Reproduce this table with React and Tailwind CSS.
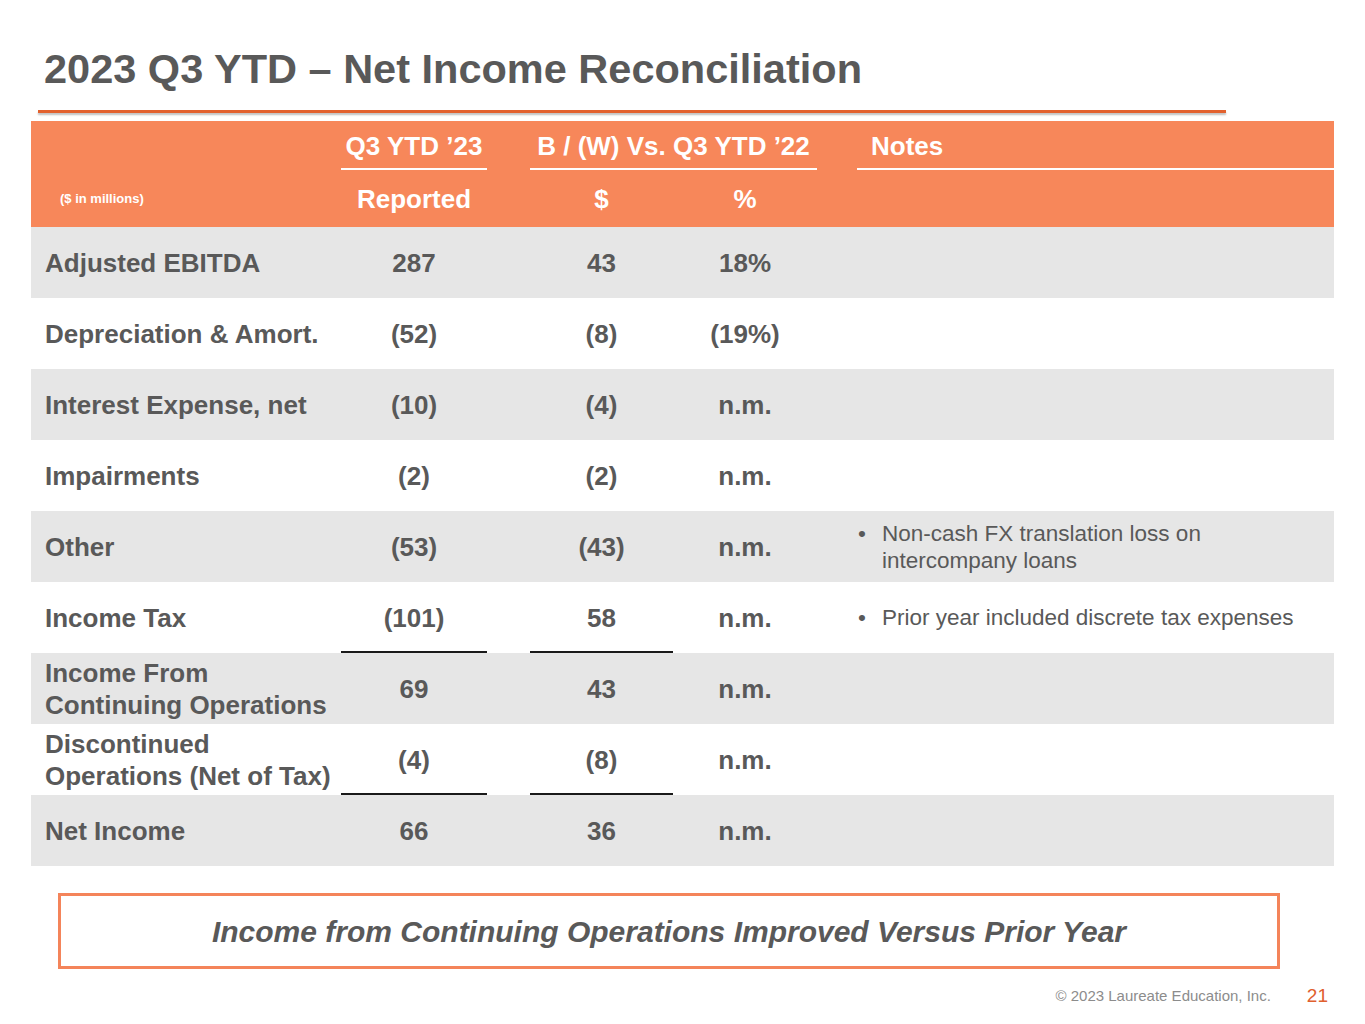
const rows = [
  { label: ["Adjusted EBITDA"], rep: "287", usd: "43", pct: "18%", grey: true },
  { label: ["Depreciation & Amort."], rep: "(52)", usd: "(8)", pct: "(19%)" },
  { label: ["Interest Expense, net"], rep: "(10)", usd: "(4)", pct: "n.m.", grey: true },
  { label: ["Impairments"], rep: "(2)", usd: "(2)", pct: "n.m." },
  {
    label: ["Other"],
    rep: "(53)",
    usd: "(43)",
    pct: "n.m.",
    grey: true,
    note: ["Non-cash FX translation loss on", "intercompany loans"],
  },
  {
    label: ["Income Tax"],
    rep: "(101)",
    usd: "58",
    pct: "n.m.",
    rule: true,
    note: ["Prior year included discrete tax expenses"],
  },
  { label: ["Income From", "Continuing Operations"], rep: "69", usd: "43", pct: "n.m.", grey: true },
  { label: ["Discontinued", "Operations (Net of Tax)"], rep: "(4)", usd: "(8)", pct: "n.m.", rule: true },
  { label: ["Net Income"], rep: "66", usd: "36", pct: "n.m.", grey: true },
];

const cols = "grid grid-cols-[310px_146px_43px_143px_144px_40px_477px]";

function DataRow({ row }) {
  const ruleCls = row.rule ? "border-b-2 border-[#1a1a1a]" : "border-b-2 border-transparent";
  return (
    <div className={`${cols} h-[71px] ${row.grey ? "bg-[#e6e6e6]" : "bg-white"}`}>
      <div className="flex flex-col justify-center pl-[14px] pt-[1px] text-[26px] leading-[32px] font-bold">
        {row.label.map((l) => (
          <span key={l} className="whitespace-nowrap">{l}</span>
        ))}
      </div>
      <div className={`flex items-center justify-center pt-[3px] text-[26px] font-bold ${ruleCls}`}>{row.rep}</div>
      <div />
      <div className={`flex items-center justify-center pt-[3px] text-[26px] font-bold ${ruleCls}`}>{row.usd}</div>
      <div className="flex items-center justify-center pt-[1px] text-[26px] font-bold">{row.pct}</div>
      <div />
      <div className="flex items-center">
        {row.note ? (
          <div className="flex text-[22.5px] leading-[27px]">
            <span className="w-[25px] pl-[1px]">•</span>
            <div className="flex flex-col">
              {row.note.map((n) => (
                <span key={n} className="whitespace-nowrap">{n}</span>
              ))}
            </div>
          </div>
        ) : null}
      </div>
    </div>
  );
}

export default function App() {
  return (
    <div
      className="w-[1365px] h-[1024px] bg-white text-[#595959] flex flex-col"
      style={{ fontFamily: '"Liberation Sans", Arial, sans-serif' }}
    >
      <h1 className="pl-[44px] pt-[45px] text-[41.5px] leading-[48px] font-bold text-[#595959]">
        2023 Q3 YTD – Net Income Reconciliation
      </h1>
      <div className="ml-[38px] mt-[17px] w-[1188px] h-[3px] bg-[#e2612e] shadow-[0_2px_2px_rgba(0,0,0,0.25)]" />

      <div className="ml-[31px] mt-[8px] w-[1303px]">
        <div className="bg-[#f7875a] text-white font-bold">
          <div className={`${cols} h-[49px]`}>
            <div />
            <div className="flex items-center justify-center pt-[3px] text-[26px] border-b-2 border-white">Q3 YTD ’23</div>
            <div className="col-span-3 flex items-center justify-center pt-[3px] text-[26px] border-b-2 border-white ml-[43px]">
              B / (W) Vs. Q3 YTD ’22
            </div>
            <div className="col-span-2 flex items-center pl-[14px] pt-[3px] text-[26px] border-b-2 border-white ml-[40px]">
              Notes
            </div>
          </div>
          <div className={`${cols} h-[57px]`}>
            <div className="flex items-center pl-[29px] text-[13px]">($ in millions)</div>
            <div className="flex items-center justify-center pt-[2px] text-[26px]">Reported</div>
            <div />
            <div className="flex items-center justify-center pt-[2px] text-[26px]">$</div>
            <div className="flex items-center justify-center pt-[2px] text-[26px]">%</div>
            <div />
            <div />
          </div>
        </div>
        {rows.map((r) => (
          <DataRow key={r.label.join(" ")} row={r} />
        ))}
      </div>

      <div className="ml-[58px] mt-[27px] w-[1222px] h-[76px] border-[3px] border-[#f4845a] flex items-center justify-center">
        <span className="text-[30px] font-bold italic text-[#595959]">
          Income from Continuing Operations Improved Versus Prior Year
        </span>
      </div>

      <div className="mt-[13px] flex items-center justify-end pr-[37px] gap-[36px]">
        <span className="text-[15px] text-[#8c8c8c]">© 2023 Laureate Education, Inc.</span>
        <span className="text-[19px] text-[#e0602e]">21</span>
      </div>
    </div>
  );
}
